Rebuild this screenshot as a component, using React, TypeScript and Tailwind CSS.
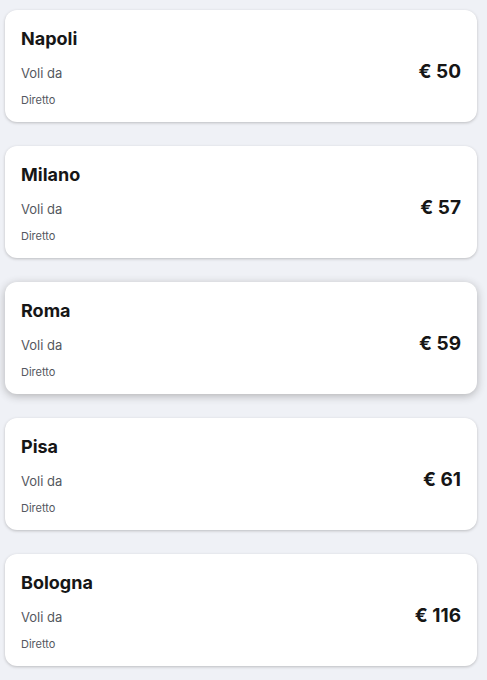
const routes = [
  { city: 'Napoli', price: 50 },
  { city: 'Milano', price: 57 },
  { city: 'Roma', price: 59, active: true },
  { city: 'Pisa', price: 61 },
  { city: 'Bologna', price: 116 },
];

function RouteCard({ city, price, active }: { city: string; price: number; active?: boolean }) {
  return (
    <div
      className={`h-[112px] rounded-xl bg-white px-4 pt-[17px] ${
        active ? 'shadow-[0_2px_8px_rgba(37,32,31,0.3)]' : 'shadow-[0_1px_3px_rgba(37,32,31,0.25)]'
      }`}
    >
      <h3 className="text-[18px] font-bold leading-6 text-[#161616]">{city}</h3>
      <div className="mt-[11px] flex items-baseline justify-between">
        <span className="text-[13px] leading-5 text-[#545860]">Voli da</span>
        <span className="text-[19px] font-bold leading-5 text-[#161616]">€ {price}</span>
      </div>
      <p className="mt-[9px] text-[11px] leading-4 text-[#545860]">Diretto</p>
    </div>
  );
}

export default function App() {
  return (
    <div
      className="min-h-[680px] bg-[#eff1f6] pl-[5px] pr-[10px] pt-[10px]"
      style={{ fontFamily: 'Inter, "Noto Sans", sans-serif' }}
    >
      <div className="flex flex-col gap-6">
        {routes.map((r) => (
          <RouteCard key={r.city} {...r} />
        ))}
      </div>
    </div>
  );
}
